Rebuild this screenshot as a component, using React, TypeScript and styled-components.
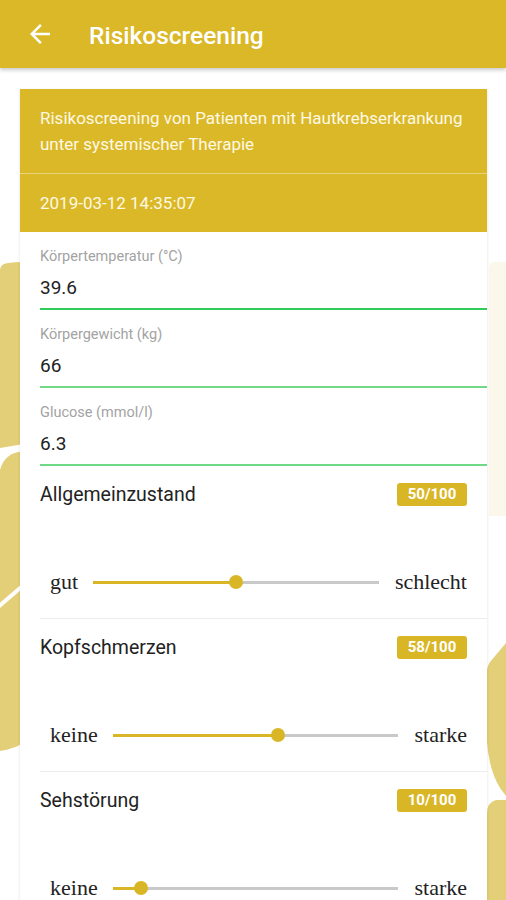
import React from 'react';
import styled, { createGlobalStyle } from 'styled-components';

const GlobalStyle = createGlobalStyle`
  html, body {
    margin: 0;
    padding: 0;
    background: #ffffff;
  }
  body {
    font-family: Roboto, "Noto Sans", Arial, sans-serif;
    -webkit-font-smoothing: antialiased;
  }
`;

const Screen = styled.div`
  position: relative;
  width: 506px;
  height: 900px;
  overflow: hidden;
  background: #ffffff;
`;

const Backdrop = styled.svg`
  position: absolute;
  top: 0;
  left: 0;
  z-index: 0;
`;

const Header = styled.header`
  position: relative;
  z-index: 2;
  height: 68px;
  display: flex;
  align-items: center;
  padding-left: 25px;
  background: #dab828;
  box-shadow: 0 2px 4px rgba(0, 0, 0, 0.22);
`;

const BackButton = styled.button`
  display: flex;
  align-items: center;
  justify-content: center;
  width: 30px;
  height: 30px;
  padding: 0;
  margin-right: 34px;
  border: none;
  background: none;
  cursor: pointer;
`;

const Title = styled.h1`
  margin: 0 0 -3px;
  font-size: 24.5px;
  font-weight: 500;
  color: #ffffff;
`;

const Content = styled.main`
  position: relative;
  z-index: 1;
  padding: 21px 19px 0 20px;
`;

const Card = styled.section`
  background: #ffffff;
  box-shadow: 0 1px 3px rgba(0, 0, 0, 0.12);
`;

const InfoBlock = styled.div<{ $divider?: boolean }>`
  padding: 16px 20px;
  background: #dab828;
  color: #fff9e3;
  font-size: 17px;
  line-height: 26px;
  border-bottom: ${(props) => (props.$divider ? '1px solid rgba(255, 255, 255, 0.4)' : 'none')};
`;

const List = styled.div`
  padding-left: 20px;
`;

const Field = styled.div`
  padding-top: 17px;
`;

const FieldLabel = styled.div`
  font-size: 14.5px;
  line-height: 16px;
  color: #a3a3a3;
`;

const FieldValue = styled.div`
  margin-top: 11px;
  font-size: 19px;
  line-height: 24px;
  color: #222222;
`;

const Underline = styled.div<{ $active?: boolean }>`
  margin-top: 8px;
  height: 2px;
  background: ${(props) => (props.$active ? '#2fcc58' : '#6fd985')};
`;

const Scale = styled.div<{ $last?: boolean }>`
  padding: 16px 20px 21px 0;
  border-bottom: ${(props) => (props.$last ? 'none' : '1px solid #ececec')};
`;

const ScaleHead = styled.div`
  display: flex;
  align-items: center;
  justify-content: space-between;
  height: 24px;
`;

const ScaleTitle = styled.span`
  font-size: 19.5px;
  color: #222222;
`;

const Badge = styled.span`
  display: flex;
  align-items: center;
  justify-content: center;
  width: 70px;
  height: 23px;
  border-radius: 3px;
  background: #d9b626;
  color: #ffffff;
  font-size: 15px;
  font-weight: 700;
`;

const SliderRow = styled.div`
  display: flex;
  align-items: center;
  height: 30px;
  margin-top: 61px;
  padding-left: 10px;
`;

const EndLabel = styled.span`
  font-family: "Liberation Serif", "Times New Roman", serif;
  font-size: 22px;
  color: #222222;
`;

const Track = styled.div`
  position: relative;
  flex: 1;
  height: 3px;
  margin: 0 16px 0 15px;
  background: #c9c9c9;
`;

const Fill = styled.div`
  position: absolute;
  left: 0;
  top: 0;
  bottom: 0;
  background: #d9b626;
`;

const Thumb = styled.div`
  position: absolute;
  top: 50%;
  width: 14px;
  height: 14px;
  margin: -7px 0 0 -7px;
  border-radius: 50%;
  background: #d9b626;
`;

const BackArrow = () => (
  <svg width="30" height="30" viewBox="0 0 24 24">
    <path fill="#ffffff" d="M20 11H7.83l5.59-5.59L12 4l-8 8 8 8 1.41-1.41L7.83 13H20v-2z" />
  </svg>
);

const Decorations = () => (
  <Backdrop width="506" height="900" viewBox="0 0 506 900">
    <g fill="#e3cf78">
      <path d="M0 270 Q0 264 8 263 L18 262 Q26 262 26 272 L26 436 Q26 444 18 445 L0 448 Z" />
      <path d="M0 470 Q4 455 18 452 L26 452 L26 740 L18 746 Q8 750 0 751 Z" />
      <path d="M506 643 L490 662 Q486 668 487 676 L487 742 Q489 770 500 788 L506 796 Z" />
      <path d="M506 800 L496 800 Q487 802 487 814 L487 900 L506 900 Z" />
    </g>
    <path d="M-2 607 L26 583" stroke="#ffffff" strokeWidth="4" />
    <path d="M506 262 L494 262 Q489 262 489 270 L489 516 L506 516 Z" fill="#fbf7ea" />
  </Backdrop>
);

type ScaleItem = {
  title: string;
  value: number;
  low: string;
  high: string;
};

const scales: ScaleItem[] = [
  { title: 'Allgemeinzustand', value: 50, low: 'gut', high: 'schlecht' },
  { title: 'Kopfschmerzen', value: 58, low: 'keine', high: 'starke' },
  { title: 'Sehstörung', value: 10, low: 'keine', high: 'starke' },
];

const fields = [
  { label: 'Körpertemperatur (°C)', value: '39.6', active: true },
  { label: 'Körpergewicht (kg)', value: '66' },
  { label: 'Glucose (mmol/l)', value: '6.3' },
];

const App: React.FC = () => (
  <Screen>
    <GlobalStyle />
    <Decorations />
    <Header>
      <BackButton aria-label="Zurück">
        <BackArrow />
      </BackButton>
      <Title>Risikoscreening</Title>
    </Header>
    <Content>
      <Card>
        <InfoBlock $divider>
          Risikoscreening von Patienten mit Hautkrebserkrankung unter systemischer Therapie
        </InfoBlock>
        <InfoBlock>2019-03-12 14:35:07</InfoBlock>
        <List>
          {fields.map((field) => (
            <Field key={field.label}>
              <FieldLabel>{field.label}</FieldLabel>
              <FieldValue>{field.value}</FieldValue>
              <Underline $active={field.active} />
            </Field>
          ))}
          {scales.map((scale, index) => (
            <Scale key={scale.title} $last={index === scales.length - 1}>
              <ScaleHead>
                <ScaleTitle>{scale.title}</ScaleTitle>
                <Badge>{scale.value}/100</Badge>
              </ScaleHead>
              <SliderRow>
                <EndLabel>{scale.low}</EndLabel>
                <Track>
                  <Fill style={{ width: `${scale.value}%` }} />
                  <Thumb style={{ left: `${scale.value}%` }} />
                </Track>
                <EndLabel>{scale.high}</EndLabel>
              </SliderRow>
            </Scale>
          ))}
        </List>
      </Card>
    </Content>
  </Screen>
);

export default App;
